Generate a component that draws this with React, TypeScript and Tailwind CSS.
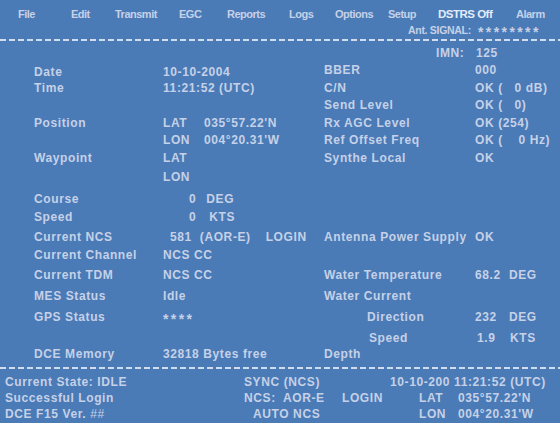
import type { ReactNode } from "react";

const Dashes = () => (
  <div className="h-[2px] w-full bg-[repeating-linear-gradient(90deg,#d3ddef_0_6px,transparent_6px_9px)]" />
);

const Row = ({ mt = "", children }: { mt?: string; children: ReactNode }) => (
  <div className={`${mt} flex h-4 items-center whitespace-pre`}>{children}</div>
);

const menu = [
  { label: "File", w: "w-[53px]" },
  { label: "Edit", w: "w-[44px]" },
  { label: "Transmit", w: "w-[64px]" },
  { label: "EGC", w: "w-[48px]" },
  { label: "Reports", w: "w-[62px]" },
  { label: "Logs", w: "w-[46px]" },
  { label: "Options", w: "w-[53px]" },
  { label: "Setup", w: "w-[50px]" },
];

const App = () => {
  return (
    <div className="h-[423px] w-[560px] overflow-hidden bg-[#4a7bb7] font-['Liberation_Sans',Arial,sans-serif] text-[12px] font-bold tracking-[0.6px] text-[#c6d1e7] leading-4">
      {/* menu */}
      <div className="pt-[6px]">
        <div className="flex h-4 items-center pl-[18px] text-[11px] tracking-[-0.5px]">
          {menu.map((m) => (
            <span key={m.label} className={`${m.w} shrink-0`}>
              {m.label}
            </span>
          ))}
          <span className="w-[78px] shrink-0 text-[11.5px] text-[#e4ebf7]">DSTRS Off</span>
          <span>Alarm</span>
        </div>
        <div className="flex h-4 items-center pl-[408px] text-[10.5px] tracking-[-0.3px]">
          <span className="w-[70px] shrink-0">Ant. SIGNAL:</span>
          <span className="pt-[3px] text-[14px] tracking-[2.4px]">********</span>
        </div>
      </div>
      <div className="mt-px">
        <Dashes />
      </div>

      {/* main */}
      <div className="flex h-[326px]">
        <div className="w-[324px] shrink-0 pl-[34px] pt-[23px]">
          <Row>
            <span className="w-[129px]">Date</span>
            <span>10-10-2004</span>
          </Row>
          <Row>
            <span className="w-[129px]">Time</span>
            <span>11:21:52 (UTC)</span>
          </Row>
          <Row mt="mt-[19px]">
            <span className="w-[129px]">Position</span>
            <span className="w-[41px]">LAT</span>
            <span>035°57.22'N</span>
          </Row>
          <Row mt="mt-[1px]">
            <span className="w-[129px]" />
            <span className="w-[41px]">LON</span>
            <span>004°20.31'W</span>
          </Row>
          <Row mt="mt-[2px]">
            <span className="w-[129px]">Waypoint</span>
            <span>LAT</span>
          </Row>
          <Row mt="mt-[3px]">
            <span className="w-[129px]" />
            <span>LON</span>
          </Row>
          <Row mt="mt-[6px]">
            <span className="w-[129px]">Course</span>
            <span className="ml-[26px]">0</span>
            <span className="ml-[10px]">DEG</span>
          </Row>
          <Row mt="mt-[2px]">
            <span className="w-[129px]">Speed</span>
            <span className="ml-[26px]">0</span>
            <span className="ml-[13px]">KTS</span>
          </Row>
          <Row mt="mt-[4px]">
            <span className="w-[129px]">Current NCS</span>
            <span className="ml-[7px]">581</span>
            <span className="ml-[8px]">(AOR-E)</span>
            <span className="ml-[15px]">LOGIN</span>
          </Row>
          <Row mt="mt-[2px]">
            <span className="w-[129px]">Current Channel</span>
            <span>NCS CC</span>
          </Row>
          <Row mt="mt-[4px]">
            <span className="w-[129px]">Current TDM</span>
            <span>NCS CC</span>
          </Row>
          <Row mt="mt-[5px]">
            <span className="w-[129px]">MES Status</span>
            <span>Idle</span>
          </Row>
          <Row mt="mt-[5px]">
            <span className="w-[129px]">GPS Status</span>
            <span className="pt-[3px] text-[14px] tracking-[2.4px]">****</span>
          </Row>
          <Row mt="mt-[21px]">
            <span className="w-[129px]">DCE Memory</span>
            <span>32818 Bytes free</span>
          </Row>
        </div>

        <div className="flex-1 pt-[4px]">
          <Row>
            <span className="w-[112px]" />
            <span className="w-[40px]">IMN:</span>
            <span>125</span>
          </Row>
          <Row mt="mt-[1px]">
            <span className="w-[151px]">BBER</span>
            <span>000</span>
          </Row>
          <Row mt="mt-[2px]">
            <span className="w-[151px]">C/N</span>
            <span>OK (   0 dB)</span>
          </Row>
          <Row mt="mt-[1px]">
            <span className="w-[151px]">Send Level</span>
            <span>OK (   0)</span>
          </Row>
          <Row mt="mt-[2px]">
            <span className="w-[151px]">Rx AGC Level</span>
            <span>OK (254)</span>
          </Row>
          <Row mt="mt-[1px]">
            <span className="w-[151px]">Ref Offset Freq</span>
            <span>OK (    0 Hz)</span>
          </Row>
          <Row mt="mt-[2px]">
            <span className="w-[151px]">Synthe Local</span>
            <span>OK</span>
          </Row>
          <Row mt="mt-[63px]">
            <span className="w-[151px]">Antenna Power Supply</span>
            <span>OK</span>
          </Row>
          <Row mt="mt-[22px]">
            <span className="w-[151px]">Water Temperature</span>
            <span className="w-[34px]">68.2</span>
            <span>DEG</span>
          </Row>
          <Row mt="mt-[5px]">
            <span className="w-[151px]">Water Current</span>
          </Row>
          <Row mt="mt-[5px]">
            <span className="w-[151px] pl-[43px]">Direction</span>
            <span className="w-[34px]">232</span>
            <span>DEG</span>
          </Row>
          <Row mt="mt-[5px]">
            <span className="w-[151px] pl-[45px]">Speed</span>
            <span className="w-[35px] pl-[2px]">1.9</span>
            <span>KTS</span>
          </Row>
          <Row>
            <span>Depth</span>
          </Row>
        </div>
      </div>

      <Dashes />

      {/* status */}
      <div className="pl-[5px] pt-[5px]">
        <Row>
          <span className="w-[239px]">Current State: IDLE</span>
          <span className="w-[146px]">SYNC (NCS)</span>
          <span>10-10-200 11:21:52 (UTC)</span>
        </Row>
        <Row>
          <span className="w-[239px]">Successful Login</span>
          <span className="w-[39px]">NCS:</span>
          <span className="w-[59px]">AOR-E</span>
          <span className="w-[77px]">LOGIN</span>
          <span className="w-[39px]">LAT</span>
          <span>035°57.22'N</span>
        </Row>
        <Row>
          <span className="w-[239px]">
            DCE F15 Ver. <span className="font-normal">##</span>
          </span>
          <span className="w-[175px] pl-[9px]">AUTO NCS</span>
          <span className="w-[39px]">LON</span>
          <span>004°20.31'W</span>
        </Row>
      </div>
    </div>
  );
};

export default App;
